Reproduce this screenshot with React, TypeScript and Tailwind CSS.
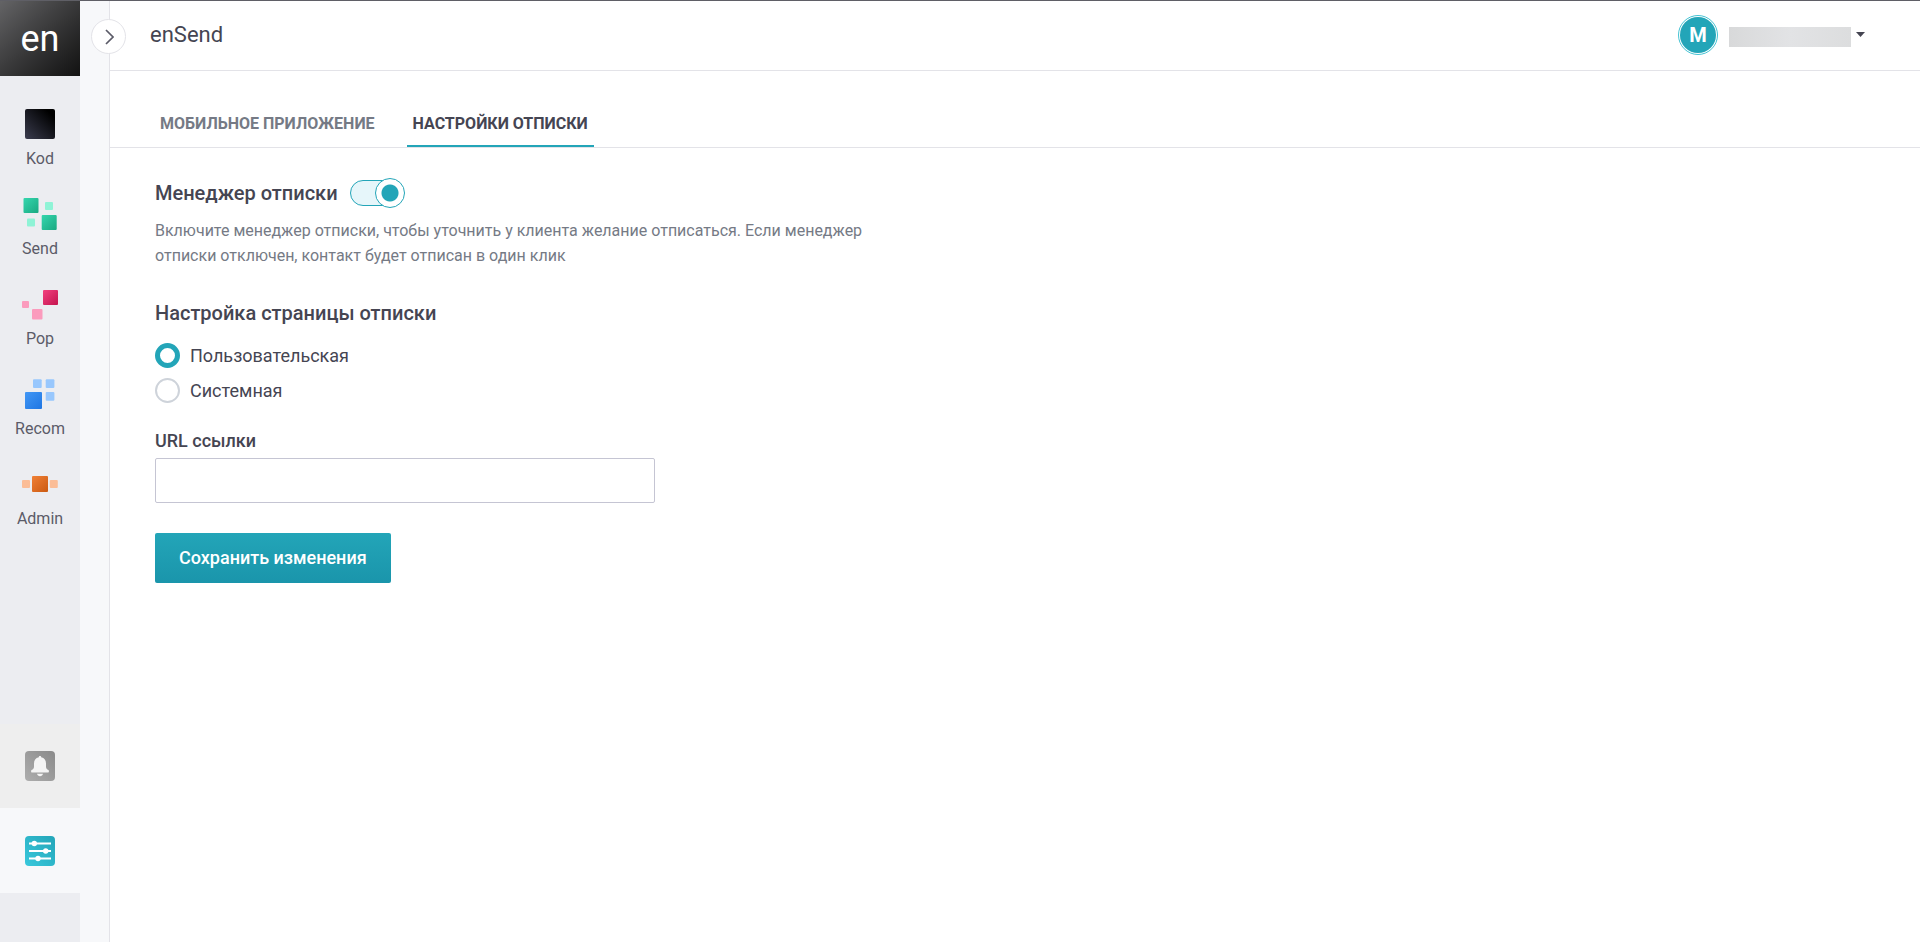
import React, { useState } from 'react';
import clsx from 'clsx';

type Square = { x: number; y: number; size: number; fill: string };
type Product = { name: string; from: string; to: string; squares: Square[] };

// squares with fill "main" use the product gradient
const products: Product[] = [
  {
    name: 'Kod',
    from: '#3a3c4e',
    to: '#000000',
    squares: [{ x: 5, y: 3, size: 30, fill: 'main' }],
  },
  {
    name: 'Send',
    from: '#35d6ae',
    to: '#19a981',
    squares: [
      { x: 3.5, y: 2, size: 15, fill: 'main' },
      { x: 25, y: 6, size: 8, fill: '#8ff3d6' },
      { x: 7, y: 22.5, size: 8, fill: '#8ff3d6' },
      { x: 21.7, y: 19, size: 15, fill: 'main' },
    ],
  },
  {
    name: 'Pop',
    from: '#f2417f',
    to: '#c4144f',
    squares: [
      { x: 23, y: 4, size: 15, fill: 'main' },
      { x: 2, y: 15, size: 7, fill: '#fb9bbd' },
      { x: 12, y: 23, size: 10.5, fill: '#fb9bbd' },
    ],
  },
  {
    name: 'Recom',
    from: '#4297f5',
    to: '#1f76e3',
    squares: [
      { x: 13, y: 3.3, size: 8.7, fill: '#98c7fd' },
      { x: 25.7, y: 3.3, size: 8.7, fill: '#98c7fd' },
      { x: 25.7, y: 16, size: 8.7, fill: '#98c7fd' },
      { x: 5, y: 16, size: 17, fill: 'main' },
    ],
  },
  {
    name: 'Admin',
    from: '#f08036',
    to: '#cb5a12',
    squares: [
      { x: 2, y: 14, size: 8, fill: '#fbbd97' },
      { x: 12, y: 10, size: 16, fill: 'main' },
      { x: 29.8, y: 14, size: 8, fill: '#fbbd97' },
    ],
  },
];

const tabs = ['Мобильное приложение', 'Настройки отписки'];

const pageTypes = [
  { id: 'custom', label: 'Пользовательская' },
  { id: 'system', label: 'Системная' },
];

function ProductIcon({ product }: { product: Product }) {
  const id = `grad-${product.name}`;
  const dark = product.name === 'Kod';

  return (
    <svg className="h-9 w-10" viewBox="0 0 40 36" aria-hidden="true">
      <defs>
        <linearGradient id={id} x1="0" y1={dark ? '1' : '0'} x2="1" y2={dark ? '0' : '1'}>
          <stop offset="0" stopColor={product.from} />
          <stop offset={dark ? '0.85' : '1'} stopColor={product.to} />
        </linearGradient>
      </defs>
      {product.squares.map((s) => (
        <rect
          key={`${s.x}-${s.y}`}
          x={s.x}
          y={s.y}
          width={s.size}
          height={s.size}
          rx={dark ? 2 : 1}
          fill={s.fill === 'main' ? `url(#${id})` : s.fill}
        />
      ))}
    </svg>
  );
}

function BellIcon() {
  return (
    <svg className="size-[30px]" viewBox="0 0 30 30" aria-hidden="true">
      <defs>
        <linearGradient id="grad-bell" x1="0" y1="1" x2="1" y2="0">
          <stop offset="0" stopColor="#adadad" />
          <stop offset="1" stopColor="#8a8a8a" />
        </linearGradient>
      </defs>
      <rect width="30" height="30" rx="4" fill="url(#grad-bell)" />
      <path
        d="M15 5c.8 0 1.2.5 1.2 1.2 3.3.7 4.8 3.2 4.8 6.3v3.3c0 1.5.9 2.5 2.4 3.3.9.5.6 2.4-.5 2.4H7.1c-1.1 0-1.4-1.9-.5-2.4C8.1 18.3 9 17.3 9 15.8v-3.3c0-3.1 1.5-5.6 4.8-6.3C13.8 5.5 14.2 5 15 5z"
        fill="#f4f4f4"
      />
      <path d="M12 22.7h6c-.3 1.4-1.5 2.5-3 2.5s-2.7-1.1-3-2.5z" fill="#f4f4f4" />
    </svg>
  );
}

function SlidersIcon() {
  return (
    <svg className="size-[30px]" viewBox="0 0 30 30" aria-hidden="true">
      <defs>
        <linearGradient id="grad-sliders" x1="0" y1="1" x2="1" y2="0">
          <stop offset="0" stopColor="#39c8dc" />
          <stop offset="1" stopColor="#23a5b8" />
        </linearGradient>
      </defs>
      <rect width="30" height="30" rx="4" fill="url(#grad-sliders)" />
      <path d="M4 7.5h22M4 15h22M4 22.5h22" stroke="#fff" strokeWidth="1.8" />
      <circle cx="9.3" cy="7.5" r="2.7" fill="#fff" />
      <circle cx="20.7" cy="15" r="2.7" fill="#fff" />
      <circle cx="13" cy="22.5" r="2.7" fill="#fff" />
    </svg>
  );
}

function Sidebar() {
  return (
    <aside className="flex w-20 shrink-0 flex-col bg-[#ecedf1]">
      <a
        href="#"
        className="flex h-[75px] items-center justify-center bg-linear-to-br from-[#646466] to-[#121212] text-[36px] leading-none text-white"
      >
        en
      </a>

      <nav className="mt-[30px] flex flex-col gap-[25px]">
        {products.map((product) => (
          <a key={product.name} href="#" className="flex flex-col items-center gap-[5px]">
            <ProductIcon product={product} />
            <span className="text-base text-[#5b5b68]">{product.name}</span>
          </a>
        ))}
      </nav>

      <div className="mt-auto mb-[49px] flex flex-col">
        <button type="button" aria-label="Уведомления" className="flex h-[84px] items-center justify-center bg-[#eeeeee]">
          <BellIcon />
        </button>
        <button type="button" aria-label="Настройки" className="flex h-[85px] items-center justify-center bg-[#f7f8fa]">
          <SlidersIcon />
        </button>
      </div>
    </aside>
  );
}

function Header() {
  return (
    <header className="flex h-[70px] items-center justify-between border-b border-[#e3e3e8] pr-[55px] pb-0.5 pl-10">
      <h1 className="text-[22px] leading-8 text-[#454552]">enSend</h1>
      <button type="button" aria-label="Профиль" className="flex items-center">
        <span className="flex size-10 items-center justify-center rounded-full border border-[#45c3d3] p-px">
          <span className="flex size-9 items-center justify-center rounded-full bg-[#23a5b8] text-xl font-bold text-white">
            M
          </span>
        </span>
        <span className="mt-1 ml-[11px] h-5 w-[122px] bg-linear-to-r from-[#d8d9da] via-[#e2e3e5] to-[#dcddde]" />
        <svg className="ml-[5px] h-[5px] w-[9px]" viewBox="0 0 9 5" aria-hidden="true">
          <path d="M0 0h9L4.5 5z" fill="#454552" />
        </svg>
      </button>
    </header>
  );
}

export default function App() {
  const [activeTab, setActiveTab] = useState(1);
  const [enabled, setEnabled] = useState(true);
  const [pageType, setPageType] = useState('custom');
  const [url, setUrl] = useState('');

  return (
    <div className="flex min-h-screen border-t border-[#5f5f66] bg-white font-[Roboto,sans-serif] text-[#454552]">
      <Sidebar />

      <div className="relative w-[30px] shrink-0 border-r border-[#e3e3e8] bg-[#f7f8fa]">
        <button
          type="button"
          aria-label="Развернуть меню"
          className="absolute top-[18px] left-[11px] flex size-[35px] items-center justify-center rounded-full border border-[#e3e3e8] bg-white"
        >
          <svg className="ml-0.5 h-4 w-[9px]" viewBox="0 0 9 16" fill="none" aria-hidden="true">
            <path d="M1 1l7 7-7 7" stroke="#5b5b68" strokeWidth="1.7" />
          </svg>
        </button>
      </div>

      <main className="min-w-0 flex-1">
        <Header />

        <div role="tablist" className="flex gap-[26px] border-b border-[#e3e3e8] pt-7 pl-11">
          {tabs.map((tab, i) => (
            <button
              key={tab}
              type="button"
              role="tab"
              aria-selected={activeTab === i}
              onClick={() => setActiveTab(i)}
              className={clsx(
                'h-12 border-b-2 px-1.5 pt-1 text-base font-bold uppercase',
                activeTab === i ? 'border-[#23a5b8] text-[#454552]' : 'border-transparent text-[#757a85]'
              )}
            >
              {tab}
            </button>
          ))}
        </div>

        <form className="flex flex-col items-start px-[45px] pt-[30px]" onSubmit={(e) => e.preventDefault()}>
          <div className="flex items-center gap-3">
            <label htmlFor="manager" className="text-xl font-medium">
              Менеджер отписки
            </label>
            <input
              id="manager"
              type="checkbox"
              role="switch"
              checked={enabled}
              onChange={(e) => setEnabled(e.target.checked)}
              className="relative h-[30px] w-[55px] cursor-pointer appearance-none before:absolute before:top-0.5 before:left-0 before:h-[26px] before:w-[52px] before:rounded-full before:border before:border-[#23a5b8] before:bg-[#e6f6fa] after:absolute after:top-0 after:left-0 after:size-[30px] after:rounded-full after:border after:border-[#23a5b8] after:bg-[radial-gradient(circle,#23a5b8_8px,#ffffff_9px)] checked:after:left-[25px]"
            />
          </div>
          <p className="mt-2.5 max-w-[725px] text-base leading-[25px] text-[#757a85]">
            Включите менеджер отписки, чтобы уточнить у клиента желание отписаться. Если менеджер отписки отключен,
            контакт будет отписан в один клик
          </p>

          <fieldset className="mt-[30px]">
            <legend className="text-xl leading-[30px] font-medium">Настройка страницы отписки</legend>
            <div className="mt-[15px] flex flex-col gap-2.5">
              {pageTypes.map((type) => (
                <label key={type.id} className="flex h-[25px] cursor-pointer items-center gap-2.5 text-lg">
                  <input
                    type="radio"
                    name="page-type"
                    value={type.id}
                    checked={pageType === type.id}
                    onChange={() => setPageType(type.id)}
                    className="size-[25px] appearance-none rounded-full border-2 border-[#ced3da] checked:border-5 checked:border-[#23a5b8]"
                  />
                  {type.label}
                </label>
              ))}
            </div>
          </fieldset>

          <label htmlFor="url" className="mt-6 text-lg font-medium">
            URL ссылки
          </label>
          <input
            id="url"
            type="text"
            value={url}
            onChange={(e) => setUrl(e.target.value)}
            className="mt-[3px] h-[45px] w-full max-w-[500px] rounded-xs border border-[#c5c5d3] px-3 text-lg"
          />

          <button
            type="submit"
            className="mt-[30px] h-[50px] rounded-xs bg-linear-to-b from-[#23a5b8] to-[#1a95ab] px-6 text-lg font-medium text-white"
          >
            Сохранить изменения
          </button>
        </form>
      </main>
    </div>
  );
}
